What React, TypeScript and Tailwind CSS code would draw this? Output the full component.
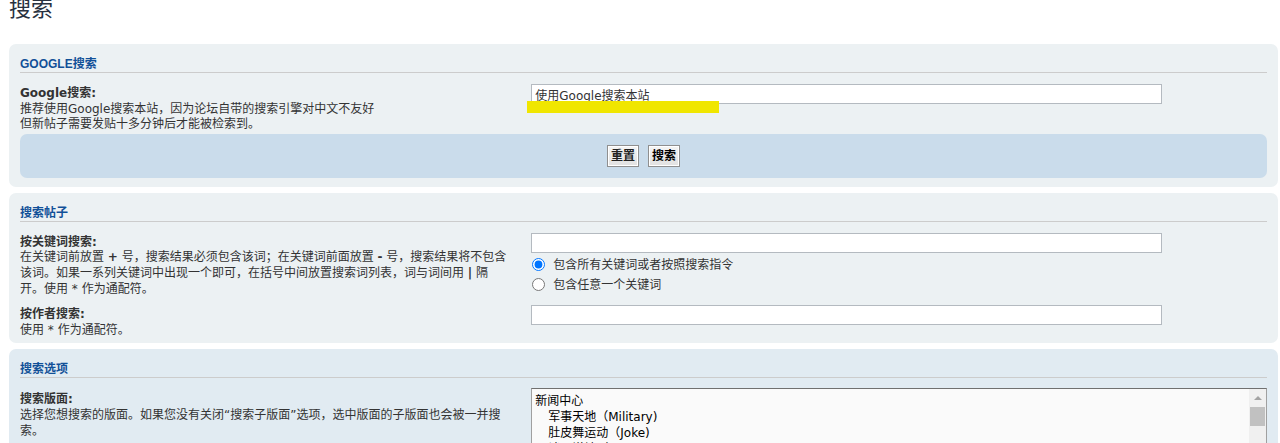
import React from "react";

const font = "font-['DejaVu_Sans','Noto_Sans_CJK_SC',sans-serif]";
const headFont = "font-['Liberation_Sans','Noto_Sans_CJK_SC',sans-serif]";

function Panel({
  title,
  bg,
  bottom,
  children,
}: {
  title: string;
  bg: string;
  bottom: string;
  children: React.ReactNode;
}) {
  return (
    <div className={`rounded-[7px] px-[11px] pt-[10px] mb-[6px] ${bg} ${bottom}`}>
      <h3
        className={`text-[12px] leading-[16px] pt-[2px] font-bold text-[#115098] border-b border-[#cccccc] ${headFont}`}
      >
        {title}
      </h3>
      {children}
    </div>
  );
}

function Term({ label, lines }: { label: string; lines: React.ReactNode }) {
  return (
    <dt className="w-[40%] shrink-0 pt-[2px] leading-[15.6px]">
      <div className="font-bold text-[#333]">{label}</div>
      <div className="text-[#333]">{lines}</div>
    </dt>
  );
}

export default function App() {
  const forums = [
    { name: "新闻中心", sub: false },
    { name: "军事天地（Military)", sub: true },
    { name: "肚皮舞运动（Joke)", sub: true },
    { name: "谈天说地（Chat)", sub: true },
    { name: "读书会", sub: false },
  ];

  return (
    <div className={`min-h-screen bg-white text-[12px] text-[#333] ${font}`}>
      <div className="pl-[9px] pr-[2px]">
        <div className="h-[44px] flex flex-col">
          <h2 className={`-mt-[2px] text-[22px] leading-[22px] text-[#28313f] font-normal ${headFont}`}>搜索</h2>
        </div>

        <Panel title="GOOGLE搜索" bg="bg-[#ecf1f3]" bottom="pb-[9px]">
          <dl className="flex mt-[11px]">
            <Term
              label="Google搜索:"
              lines={
                <>
                  推荐使用Google搜索本站，因为论坛自带的搜索引擎对中文不友好
                  <br />
                  但新帖子需要发贴十多分钟后才能被检索到。
                </>
              }
            />
            <dd className="ml-[1%] flex-1 relative">
              <input
                type="text"
                defaultValue="使用Google搜索本站"
                className="block w-[631px] h-[20px] bg-white border border-[#b4bac0] px-[3px] text-[12px] text-[#333] outline-none"
              />
              <div className="absolute left-[-4px] top-[17px] w-[192px] h-[12px] bg-[#f0e600]" />
            </dd>
          </dl>
          <div className="mt-[1px] h-[44px] rounded-[7px] bg-[#cadceb] flex items-center justify-center gap-[9px]">
            <button className="h-[22px] px-[3px] border border-[#8f8f8f] bg-gradient-to-b from-[#f5f5f5] to-[#e1e1e1] text-[12px] font-bold text-[#222] leading-none shadow-[inset_0_0_0_1px_#ffffff]">
              重置
            </button>
            <button className="h-[22px] px-[3px] border border-[#8f8f8f] bg-gradient-to-b from-[#f5f5f5] to-[#e1e1e1] text-[12px] font-bold text-black leading-none shadow-[inset_0_0_0_1px_#ffffff]">
              搜索
            </button>
          </div>
        </Panel>

        <Panel title="搜索帖子" bg="bg-[#ecf1f3]" bottom="pb-[5px]">
          <dl className="flex mt-[11px]">
            <Term
              label="按关键词搜索:"
              lines={
                <>
                  在关键词前放置 <b>+</b> 号，搜索结果必须包含该词；在关键词前面放置 <b>-</b> 号，搜索结果将不包含
                  <br />
                  该词。如果一系列关键词中出现一个即可，在括号中间放置搜索词列表，词与词间用 <b>|</b> 隔
                  <br />
                  开。使用 * 作为通配符。
                </>
              }
            />
            <dd className="ml-[1%] flex-1">
              <input
                type="text"
                className="block w-[631px] h-[20px] bg-white border border-[#b4bac0] px-[3px] outline-none"
              />
              <label className="flex items-center h-[20px] mt-[2px] gap-[8px]">
                <input type="radio" name="terms" defaultChecked className="m-0 ml-[1px] w-[13px] h-[13px] accent-[#0075ff]" />
                <span>包含所有关键词或者按照搜索指令</span>
              </label>
              <label className="flex items-center h-[20px] gap-[8px]">
                <input type="radio" name="terms" className="m-0 ml-[1px] w-[13px] h-[13px]" />
                <span>包含任意一个关键词</span>
              </label>
            </dd>
          </dl>
          <dl className="flex mt-[8px]">
            <Term label="按作者搜索:" lines="使用 * 作为通配符。" />
            <dd className="ml-[1%] flex-1">
              <input
                type="text"
                className="block w-[631px] h-[20px] bg-white border border-[#b4bac0] px-[3px] outline-none"
              />
            </dd>
          </dl>
        </Panel>

        <Panel title="搜索选项" bg="bg-[#e1ebf2]" bottom="pb-[8px]">
          <dl className="flex mt-[12px]">
            <Term
              label="搜索版面:"
              lines="选择您想搜索的版面。如果您没有关闭“搜索子版面”选项，选中版面的子版面也会被一并搜索。"
            />
            <dd className="ml-[1%] flex-1 -mt-[2px]">
              <div className="flex h-[110px] bg-[#fafafa] border border-[#a0a0a0] border-t-[#707070]">
                <div className="flex-1 pt-[4px] text-black">
                  {forums.map((f) => (
                    <div key={f.name} className={`h-[16px] leading-[16px] ${f.sub ? "pl-[16px]" : "pl-[3px]"}`}>
                      {f.name}
                    </div>
                  ))}
                </div>
                <div className="w-[17px] bg-[#f0f0f0] flex flex-col items-center">
                  <div className="h-[18px] flex items-center justify-center">
                    <div className="w-0 h-0 border-l-[4px] border-r-[4px] border-b-[4px] border-l-transparent border-r-transparent border-b-[#a3a3a3]" />
                  </div>
                  <div className="w-[15px] h-[19px] bg-[#c1c1c1]" />
                </div>
              </div>
            </dd>
          </dl>
        </Panel>
      </div>
    </div>
  );
}
